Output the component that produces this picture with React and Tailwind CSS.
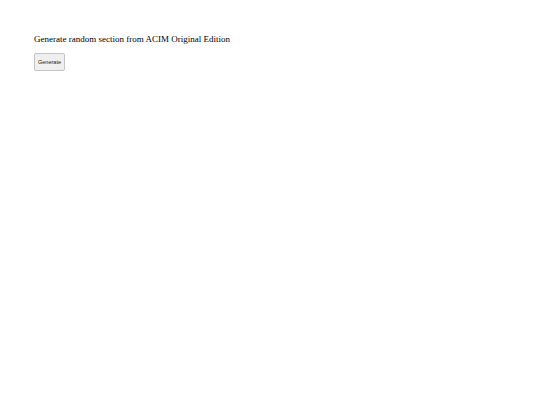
export default function App() {
  return (
    <div className="min-h-[405px] bg-white pl-[34px] pt-[32px] font-['Liberation_Serif',serif]">
      <p className="text-[9px] leading-[14px] text-black">Generate random section from ACIM Original Edition</p>
      <button className="mt-[7px] flex h-[18px] w-[31px] items-center justify-center rounded-[2px] border border-[#c4c4c4] bg-[#efefef] font-['Liberation_Sans',Arial,sans-serif] text-[5.5px] text-[#222]">
        Generate
      </button>
    </div>
  );
}
